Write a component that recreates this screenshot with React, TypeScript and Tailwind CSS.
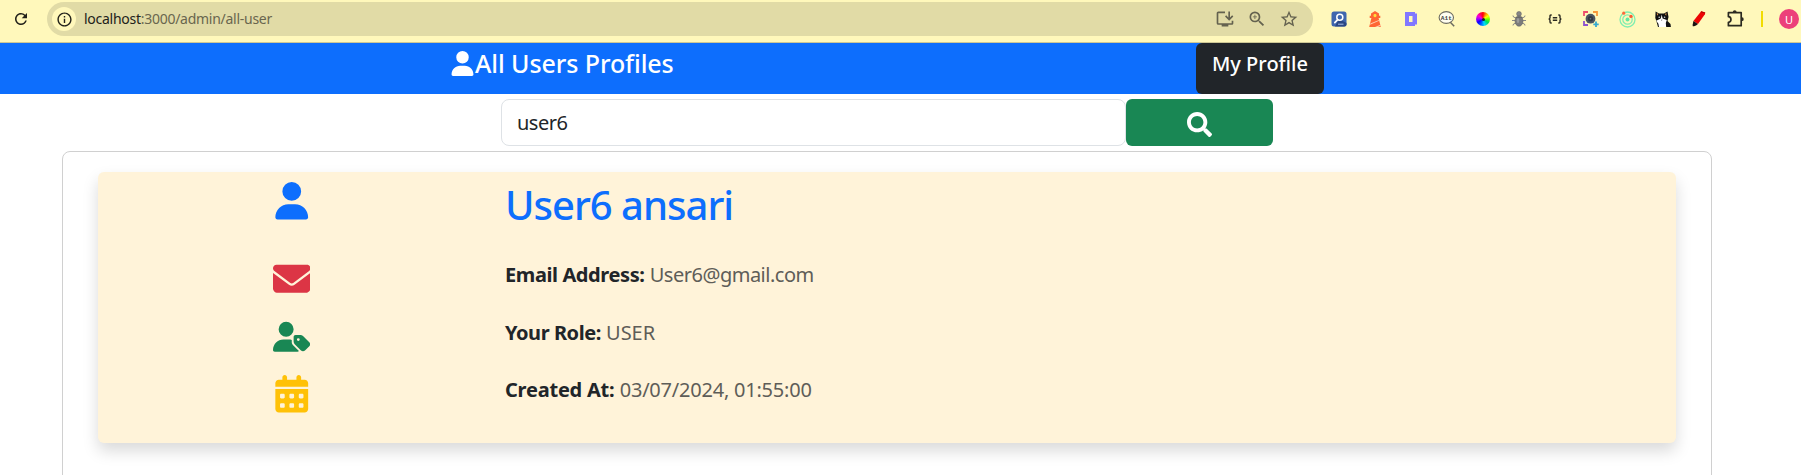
import React from "react";
import { FaUser, FaEnvelope, FaUserTag, FaCalendarDays } from "react-icons/fa6";
import { FaSearch } from "react-icons/fa";
import {
  MdRefresh,
  MdInfoOutline,
  MdOutlineInstallDesktop,
  MdZoomIn,
  MdStarBorder,
} from "react-icons/md";

function InspectorIcon() {
  return (
    <svg width="16" height="16" viewBox="0 0 16 16">
      <rect x="0.5" y="0.5" width="15" height="15" rx="2.5" fill="#3f66ae" />
      <path d="M8 8l7.5 4v1.5a2 2 0 0 1-2 2H4z" fill="#2a4784" />
      <circle cx="8.8" cy="6.3" r="3" fill="none" stroke="#fff" strokeWidth="1.5" />
      <path d="M6.7 8.6L3.8 11.6" stroke="#fff" strokeWidth="1.6" strokeLinecap="round" />
      <path d="M7 13.2h5.5" stroke="#a9bde6" strokeWidth="1" />
    </svg>
  );
}

function LighthouseIcon() {
  return (
    <svg width="16" height="16" viewBox="0 0 16 16">
      <path d="M8 0l4 2.600v2.200h1.300v2.200H11.600L13.800 16H2.200L4.400 7H2.700V4.800H4V2.600z" fill="#ff6633" />
      <rect x="6.500" y="3" width="3" height="3.200" rx="1.400" fill="#ffe03c" />
      <path d="M3.300 12.600L12 8.900l.2.900L3 13.700z" fill="#ffd0b0" />
      <path d="M8 16l5.400-2.300.3 1.100-2.600 1.200z" fill="#ffd0b0" />
    </svg>
  );
}

function BlockDIcon() {
  return (
    <svg width="14" height="16" viewBox="0 0 14 16">
      <path fillRule="evenodd" d="M1 1h10v1.500h2v11h-2v1.500H1zM5 5v6h3.500v-6z" fill="#8177ff" />
    </svg>
  );
}

function AltTextIcon() {
  return (
    <svg width="18" height="18" viewBox="0 0 18 18">
      <ellipse cx="8.300" cy="7.500" rx="7.200" ry="5.900" fill="#fffef0" stroke="#6d6c60" strokeWidth="1.100" />
      <path d="M12.300 12.300L16.200 16.300" stroke="#6d6c60" strokeWidth="1.500" />
      <text x="8.300" y="9.600" textAnchor="middle" fontSize="6.200" fontWeight="700" fontFamily="Liberation Mono, monospace" fill="#444">
        A1t
      </text>
    </svg>
  );
}

function ColorWheelIcon() {
  return (
    <span className="flex h-[14px] w-[14px] items-center justify-center rounded-full bg-[conic-gradient(#ff0000,#ff9000_30deg,#ffff00_60deg,#60ff00_95deg,#00e060_125deg,#00d8ff_165deg,#0060ff_200deg,#1000ff_235deg,#a000ff_270deg,#ff00d0_305deg,#ff0050_335deg,#ff0000)]">
      <span className="h-[3px] w-[3px] rounded-full bg-[#222222]" />
    </span>
  );
}

function BugIcon() {
  return (
    <svg width="16" height="16" viewBox="0 0 16 16">
      <g stroke="#8a8a86" strokeWidth="1" fill="none">
        <path d="M5 7L2.500 6 2 4.500M11 7l2.500-1 .5-1.500M4.500 9.500H1M11.500 9.500H15M5 12l-2.500 1-.5 1.500M11 12l2.500 1 .5 1.500" />
      </g>
      <circle cx="8" cy="2.900" r="2.400" fill="#858585" stroke="#6a6a6a" strokeWidth="0.600" />
      <ellipse cx="8" cy="10" rx="4" ry="5.200" fill="#7b7b7b" stroke="#646464" strokeWidth="0.600" />
      <path d="M4.800 6.300h6.400" stroke="#5e5e5e" strokeWidth="0.800" />
      <ellipse cx="7" cy="9.500" rx="1.300" ry="2.600" fill="#9c9c9c" />
    </svg>
  );
}

function BracesIcon() {
  return (
    <svg width="14" height="10" viewBox="0 0 14 10" fill="none" stroke="#2b2a20" strokeWidth="1.400">
      <path d="M3.700 1H2.900Q2 1 2 2v1.700Q2 5 .600 5 2 5 2 6.300V8q0 1 .9 1h.8M10.300 1h.8q.9 0 .9 1v1.700Q12 5 13.400 5 12 5 12 6.300V8q0 1-.9 1h-.8" />
      <path d="M4.800 3.700h4.400M4.800 6.300h4.400" />
    </svg>
  );
}

function CaptureIcon() {
  return (
    <svg width="16" height="16" viewBox="0 0 16 16" fill="none" strokeWidth="1.800">
      <path d="M1 5V1h4" stroke="#ef4b6c" />
      <path d="M10 1h4v4" stroke="#f9983a" />
      <path d="M1 10v4h4" stroke="#8d52cf" />
      <path d="M13 10.500V16M10.300 13.300h5.400" stroke="#35a9cf" />
      <circle cx="7.500" cy="7.700" r="4.900" fill="#4a5360" />
      <circle cx="7.500" cy="7.700" r="2.600" fill="#303844" />
      <circle cx="7.500" cy="7.700" r="0.800" fill="#6c7888" />
    </svg>
  );
}

function OrbitIcon() {
  return (
    <svg width="17" height="17" viewBox="0 0 17 17" fill="none">
      <circle cx="8.500" cy="8.500" r="7.500" stroke="#80eeb0" strokeWidth="1.300" />
      <circle cx="8.500" cy="8.500" r="4.700" stroke="#80eeb0" strokeWidth="1.300" />
      <circle cx="8.500" cy="8.500" r="2" fill="#62e8a2" />
      <circle cx="4.700" cy="2.200" r="1.600" fill="#fb6a3c" />
      <circle cx="12" cy="5.400" r="1.700" fill="#fb5a30" />
    </svg>
  );
}

function CatIcon() {
  return (
    <svg width="16" height="16" viewBox="0 0 16 16">
      <path d="M0.600 0.400L4 2.400h5L12.500.4 13.500 6 12.500 10l3 3 .4 3H3L1.500 10.500.300 7z" fill="#111" />
      <path d="M1.800 1.900l1.500 1-1.200 1.800zM11.400 1.900l-1.500 1 1.400 1.800z" fill="#e89a4e" />
      <path d="M6.700 3.500l.9 4L11.800 9l-1 3 .4 4H4l-.6-3.200L1.200 9.800 5.800 7.500z" fill="#fff" />
      <circle cx="4.200" cy="6.300" r="0.800" fill="#cfd6d8" />
      <circle cx="9.600" cy="6.300" r="0.800" fill="#cfd6d8" />
      <path d="M5.900 8.800h1.600l-.8.900z" fill="#333" />
    </svg>
  );
}

function MarkerIcon() {
  return (
    <svg width="16" height="18" viewBox="0 0 16 18">
      <path d="M10.200 1.200l4 1.300-.3 1.800L7 14l-4.600-2.900z" fill="#ec0505" />
      <path d="M10.200 1.200l4 1.300-.2.900-4.500-1.200z" fill="#b80000" />
      <path d="M2.400 11.100L7 14l-2 1.600-2 .6-1.200 0-.2-1.200z" fill="#1b1212" />
    </svg>
  );
}

function PuzzleIcon() {
  return (
    <svg width="18" height="18" viewBox="0 0 18 18" fill="none" stroke="#2b2a20" strokeWidth="1.700" strokeLinejoin="round">
      <path d="M2.400 2.700H15.200V15.700H2.400V12.300C5.800 12 5.800 7 2.400 6.700z" />
      <path d="M6.800 2a1.900 1.700 0 0 1 3.800 0zM16 7.300a1.700 1.900 0 0 1 0 3.800z" fill="#2b2a20" stroke="none" />
    </svg>
  );
}

const extensions = [
  InspectorIcon,
  LighthouseIcon,
  BlockDIcon,
  AltTextIcon,
  ColorWheelIcon,
  BugIcon,
  BracesIcon,
  CaptureIcon,
  OrbitIcon,
  CatIcon,
  MarkerIcon,
  PuzzleIcon,
];

function BrowserBar() {
  return (
    <header className="flex h-[43px] shrink-0 items-start border-b border-[#cdc795] bg-[#fff8bb] pt-[2px]">
      <div className="flex h-[34px] w-[47px] shrink-0 items-center pl-[12px]">
        <MdRefresh className="text-[#22211a]" size={18} />
      </div>
      <div className="flex h-[34px] w-[1266px] shrink-0 items-center rounded-full bg-[#e1dba6] pl-[5px] pr-[14px]">
        <span className="flex h-6 w-6 items-center justify-center rounded-full bg-[#fff8bb]">
          <MdInfoOutline className="text-[#22211a]" size={17} />
        </span>
        <span className="ml-2 whitespace-nowrap text-[14px] leading-5 tracking-[-0.27px] text-[#69664e]">
          <span className="text-[#22211a]">localhost</span>:3000/admin/all-user
        </span>
        <div className="ml-auto flex items-center gap-3 text-[#64624f]">
          <MdOutlineInstallDesktop size={20} />
          <MdZoomIn size={20} />
          <MdStarBorder size={20} />
        </div>
      </div>
      <div className="ml-2 flex h-[34px] shrink-0 items-center">
        {extensions.map((Icon, i) => (
          <span key={i} className="flex w-9 shrink-0 items-center justify-center">
            <Icon />
          </span>
        ))}
        <span className="ml-2 h-4 w-[2px] bg-[#f2dc00]" />
        <span className="ml-4 flex h-5 w-5 shrink-0 items-center justify-center rounded-full bg-[#ec407a] text-[11px] leading-none text-white">
          U
        </span>
      </div>
    </header>
  );
}

function PageHeader() {
  return (
    <nav className="flex h-[51px] shrink-0 justify-between bg-[#0d6efd] pl-[450px] pr-[477px] text-white">
      <h4 className="flex items-start pt-[5px] text-[25px] font-[550] leading-[30px] tracking-[-0.08px]">
        <FaUser className="mt-[3px]" size={25} />
        <span>All Users Profiles</span>
      </h4>
      <button className="w-32 rounded-md bg-[#212529] pb-[18px] pt-[9px] text-center text-[20px] font-[550] leading-6">
        My Profile
      </button>
    </nav>
  );
}

function SearchBar() {
  return (
    <form className="mt-[5px] flex h-[47px] shrink-0 pl-[501px]">
      <input
        className="w-[625px] rounded-lg border border-[#dee2e6] px-[15px] text-[20px] tracking-[-0.5px] text-[#212529] outline-none"
        defaultValue="user6"
      />
      <button
        type="button"
        className="flex w-[147px] items-center justify-center rounded-md bg-[#198754] pt-[3px] text-white"
      >
        <FaSearch size={25} />
      </button>
    </form>
  );
}

function UserCard() {
  return (
    <article className="mx-[35px] mt-5 h-[271px] rounded-md bg-[#fff3d9] shadow-[0_8px_16px_rgba(0,0,0,0.15)]">
      <div className="flex h-[78px]">
        <div className="flex w-[387px] justify-center pt-[10px] text-[#0d6efd]">
          <FaUser size={37.5} />
        </div>
        <h1 className="pl-5 pt-[9px] text-[40px] font-[550] leading-[48px] tracking-[-1px] text-[#0d6efd]">
          User6 ansari
        </h1>
      </div>
      <div className="flex h-[58px]">
        <div className="flex w-[387px] justify-center pt-[10px] text-[#dc3545]">
          <FaEnvelope size={37.5} />
        </div>
        <p className="pl-5 pt-[13px] text-[20px] leading-6 text-[#5e5d58]">
          <strong className="tracking-[-0.4px] text-[#212529]">Email Address:</strong>{" "}
          <span className="tracking-[-0.5px]">User6@gmail.com</span>
        </p>
      </div>
      <div className="flex h-[58px]">
        <div className="flex w-[387px] justify-center pt-[10px] text-[#198754]">
          <FaUserTag size={37.5} />
        </div>
        <p className="pl-5 pt-[13px] text-[20px] leading-6 text-[#5e5d58]">
          <strong className="tracking-[-0.45px] text-[#212529]">Your Role:</strong> <span>USER</span>
        </p>
      </div>
      <div className="flex">
        <div className="flex w-[387px] justify-center pt-[9px] text-[#ffc107]">
          <FaCalendarDays size={37.5} />
        </div>
        <p className="pl-5 pt-3 text-[20px] leading-6 text-[#5e5d58]">
          <strong className="tracking-[-0.22px] text-[#212529]">Created At:</strong>{" "}
          <span className="tracking-[-0.22px]">03/07/2024, 01:55:00</span>
        </p>
      </div>
    </article>
  );
}

export default function App() {
  return (
    <div className="flex h-[475px] flex-col overflow-hidden bg-white font-['Noto_Sans',sans-serif]">
      <BrowserBar />
      <PageHeader />
      <SearchBar />
      <main className="ml-[62px] mt-[5px] h-[400px] w-[1650px] shrink-0 rounded-t-lg border border-[#d0d0d0]">
        <UserCard />
      </main>
    </div>
  );
}
